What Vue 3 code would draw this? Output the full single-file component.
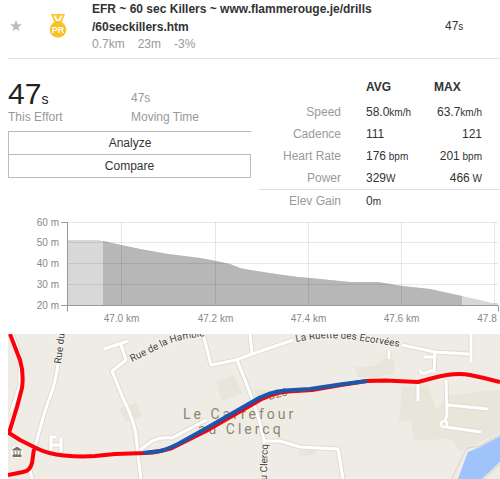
<template>
  <main class="effort">
    <header class="segment">
      <button class="segment__star" type="button" aria-label="Star segment">
        <svg viewBox="0 0 12 12" width="12" height="12">
          <path d="M6 0l1.500 4.200H12L8.400 6.900l1.300 4.400L6 8.700l-3.700 2.600 1.300-4.400L0 4.200h4.500z" fill="#bdbdbd" />
        </svg>
      </button>
      <svg class="segment__medal" viewBox="0 0 18 24" width="18" height="24">
        <path d="M2 0h14l-3.500 9h-7z" fill="#fcc534" />
        <path d="M4.500 1.500h2.500l2 3.500 2-3.500h2.500L11 7H7z" fill="#fff" />
        <path d="M6.500 1.500L9 5.500l2.500-4" stroke="#fcc534" fill="none" />
        <circle cx="9" cy="15.500" r="8.300" fill="#fcc022" />
        <text x="9" y="18.500" text-anchor="middle">PR</text>
      </svg>
      <div>
        <h1>EFR ~ 60 sec Killers ~ www.flammerouge.je/drills<br />/60seckillers.htm</h1>
        <p class="segment__facts">
          <span v-for="fact in facts" :key="fact">{{ fact }}</span>
        </p>
      </div>
      <div class="segment__time">47<small>s</small></div>
    </header>

    <section class="summary">
      <div>
        <dl class="times">
          <div class="times__item">
            <dd class="times__main">47<small>s</small></dd>
            <dt>This Effort</dt>
          </div>
          <div class="times__item">
            <dd>47s</dd>
            <dt>Moving Time</dt>
          </div>
        </dl>
        <div class="actions">
          <button type="button">Analyze</button>
          <button type="button">Compare</button>
        </div>
      </div>

      <table class="stats">
        <thead>
          <tr>
            <td></td>
            <th scope="col">AVG</th>
            <th scope="col">MAX</th>
          </tr>
        </thead>
        <tbody>
          <tr v-for="row in stats" :key="row.label">
            <th scope="row">{{ row.label }}</th>
            <td>{{ row.avg }}<small>{{ row.avgUnit }}</small></td>
            <td>{{ row.max }}<small>{{ row.maxUnit }}</small></td>
          </tr>
        </tbody>
      </table>
    </section>

    <svg class="chart" viewBox="0 216 500 112" role="img" aria-label="Elevation profile">
      <path :d="areaPath(profile)" fill="#d8d8d8" />
      <path :d="areaPath(effortProfile)" fill="#b7b7b7" />
      <g class="chart__grid">
        <line v-for="tick in yTicks" :key="tick.label" x1="67" x2="498" :y1="tick.y" :y2="tick.y" />
        <line v-for="tick in xTicks" :key="tick.label" :x1="tick.x" :x2="tick.x" y1="222" y2="305" />
      </g>
      <path class="chart__axis" d="M61 222.500h6.500v89M61 305.500h437.500v6" />
      <text v-for="tick in yTicks" :key="tick.label" x="59" :y="tick.y + 3" text-anchor="end">{{ tick.label }}</text>
      <text v-for="tick in xTicks" :key="tick.label" :x="tick.labelX || tick.x" y="322" text-anchor="middle">{{ tick.label }}</text>
    </svg>

    <svg class="map" viewBox="8 334 492 145" role="img" aria-label="Route map">
      <rect x="8" y="334" width="492" height="145" fill="#efece5" />
      <g fill="#e8e5db">
        <path d="M119 408l17-5 6 14-17 5zM216 381l18-6 8 18-20 8z" />
        <path d="M355 367l20-1 12-9 7 3v14l-22 4-14-1z" />
        <path d="M402 387l26-2 8 25 11-14 34-5 19-1v42l-40 20-8-13-38 1-3-19h-12z" />
        <path d="M297 452l16-4 4 6-16 3zM255 389l16 1-4 10h-12z" />
      </g>
      <path d="M500 436l-20 11-12 5-5 13-5 14h24l18-17z" fill="#a1c3fc" />
      <g class="map__casing">
        <path v-for="road in roads" :key="road" :d="road" />
      </g>
      <g class="map__road">
        <path v-for="road in roads" :key="road" :d="road" />
      </g>
      <g class="map__bank">
        <path d="M452 479l11-24 5-7 12-2 20-12M484 479l16-15" />
      </g>
      <circle cx="444" cy="424" r="3" fill="#e6e3d9" stroke="#fff" stroke-width="2" />

      <g class="map__place">
        <text x="183" y="419">Le Carrefour</text>
        <text x="198" y="434">au Clercq</text>
      </g>
      <text class="map__route-number" transform="translate(269 400) rotate(-14)">D26</text>

      <g class="map__track map__track--ride">
        <path d="M10 334L20 360Q24 373 22 388L17 407 9 433 20 440 36 448 Q48 454 64 455.500T95 456L115 454 146 453 Q160 452 172 448L206 431 253 404 Q270 393 288 391.500L312 390 341 385 367 381 385 380.500 418 382 433 378 Q455 372 470 375T500 382" />
        <path d="M34 449L32 463Q30 471 23 472L8 475" />
      </g>
      <path
        class="map__track map__track--effort"
        d="M143 453L160 451Q168 449 178 444L205 429 252 402 Q268 392 285 390.500L310 389 340 384.500 367 381"
      />

      <g class="map__street">
        <path id="hambie" d="M132 362L168 344Q183 338 215 335" fill="none" />
        <path id="ecorvees" d="M296 342Q330 335 362 341L406 348" fill="none" />
        <text transform="translate(61 364) rotate(-83)">Rue du</text>
        <text><textPath href="#hambie">Rue de la Hambie</textPath></text>
        <text><textPath href="#ecorvees">La Ruette des Ecorvées</textPath></text>
        <text transform="translate(268 444) rotate(-88)" text-anchor="end">u Clercq</text>
      </g>

      <circle cx="17" cy="452" r="6" fill="#fff" />
      <path d="M12.500 450l4.500-3 4.500 3zM13 455h8v1.500h-8zM14 451v4M17 451v4M20 451v4" fill="#7d725f" stroke="#7d725f" />
    </svg>
  </main>
</template>

<script setup>
const facts = ["0.7km", "23m", "-3%"];

const stats = [
  { label: "Speed", avg: "58.0", avgUnit: "km/h", max: "63.7", maxUnit: "km/h" },
  { label: "Cadence", avg: "111", max: "121" },
  { label: "Heart Rate", avg: "176", avgUnit: " bpm", max: "201", maxUnit: " bpm" },
  { label: "Power", avg: "329", avgUnit: "W", max: "466", maxUnit: " W" },
  { label: "Elev Gain", avg: "0", avgUnit: "m" },
];

const yTicks = [
  { label: "60 m", y: 222.5 },
  { label: "50 m", y: 242.5 },
  { label: "40 m", y: 263.5 },
  { label: "30 m", y: 284.5 },
  { label: "20 m", y: 305.5 },
];

const xTicks = [
  { label: "47.0 km", x: 121.5 },
  { label: "47.2 km", x: 215.5 },
  { label: "47.4 km", x: 308.5 },
  { label: "47.6 km", x: 401.5 },
  { label: "47.8", x: 494.5, labelX: 487 },
];

const profile = [
  [67, 240], [98, 240], [103, 241], [121, 245], [140, 249], [168, 254],
  [200, 258], [216, 261], [230, 264], [240, 268], [250, 270], [276, 274],
  [298, 277], [310, 278], [350, 282], [378, 282], [402, 286], [430, 289],
  [462, 296], [480, 300], [492, 303], [498, 303],
];

// the darker part of the chart covers only the segment itself
const effortProfile = profile.filter(([x]) => x >= 103 && x <= 462);

function areaPath(points) {
  const start = points[0][0];
  const end = points[points.length - 1][0];
  const line = points.map((point) => point.join(" ")).join("L");
  return `M${start} 305L${line}L${end} 305Z`;
}

const roads = [
  "M12 334L20 355V385L11 412",
  "M58 364Q55 385 50 397T35 447",
  "M51 436V450M51 437h5M61 438V452M51 445H61",
  "M104 349L128 341M121 345L126 360 112 371 122 396Q134 420 136 435L138 455 141 479",
  "M140 450L152 441Q160 437 172 438L206 420",
  "M30 470L32 479",
  "M203 334L211 365 236 360 252 354 293 340M250 334L252 353",
  "M237 360L245 380 253 401 259 420 264 440V479",
  "M264 441H280L300 447 338 449 343 479",
  "M402 345L435 352 469 354M471 334V362M389 350V359M435 352L434 373",
  "M424 357H434M420 370Q420 374 425 373L433 370M418 383V401",
  "M446 380L447 415 444 424M446 427L481 432M448 405L488 409",
];
</script>

<style>
body {
  margin: 0;
  background: #fff;
}
</style>

<style scoped>
.effort {
  font-family: "Liberation Sans", Arial, sans-serif;
  font-size: 12px;
  line-height: 14px;
  color: #333;
}

small {
  font-size: 10px;
  line-height: 1;
  white-space: pre;
}

button {
  font: inherit;
  color: inherit;
  background: none;
  cursor: pointer;
}

.segment {
  display: grid;
  grid-template-columns: 16px 68px 1fr 55px;
  align-items: center;
  margin-left: 8px;
  padding-bottom: 6px;
  border-bottom: 1px solid #e2e2e2;
}

.segment__star {
  display: flex;
  padding: 0 2px;
  border: none;
}

.segment__medal {
  justify-self: center;
}

.segment__medal text {
  font-size: 9px;
  font-weight: 700;
  fill: #fff;
}

.segment h1 {
  margin: 0;
  font-size: 12px;
  line-height: 18px;
  white-space: nowrap;
}

.segment__facts {
  display: flex;
  gap: 13px;
  margin: 0;
  line-height: 16px;
  color: #999;
}

.summary {
  display: grid;
  grid-template-columns: 243fr 241fr;
  gap: 8px;
  margin-left: 8px;
  padding-bottom: 4px;
}

.times {
  display: grid;
  grid-template-columns: 123px 1fr;
  align-items: end;
  margin: 18px 0 7px;
  color: #999;
}

.times__item dd {
  margin: 0;
  line-height: 24px;
}

.times__item dt {
  line-height: 14px;
}

.times__item .times__main {
  font-size: 30px;
  line-height: 33px;
  color: #222;
}

.times__main small {
  font-size: 14px;
}

.actions {
  display: grid;
}

.actions button {
  height: 23px;
  padding: 0;
  border: 1px solid #bbb;
  border-width: 1px 0 0 1px;
}

.actions button:last-child {
  height: 24px;
  border-width: 1px;
}

.stats {
  width: 100%;
  height: fit-content;
  margin-top: 14px;
  border-collapse: separate;
  border-spacing: 0;
  table-layout: fixed;
}

.stats th,
.stats td {
  height: 22px;
  padding: 0;
  text-align: left;
}

.stats thead td {
  width: 107px;
}

.stats thead th,
.stats thead td {
  height: 28px;
}

.stats thead th:last-child {
  width: 66px;
}

.stats tbody th {
  padding-right: 25px;
  font-weight: 400;
  text-align: right;
  color: #999;
}

.stats tbody td:last-child {
  padding-right: 18px;
  text-align: right;
}

.stats tbody tr:last-child > * {
  border-top: 1px solid #ddd;
}

.chart {
  display: block;
  width: 100%;
}

.chart text {
  font-size: 10px;
  fill: #888;
}

.chart__grid {
  stroke: #000;
  stroke-opacity: 0.09;
}

.chart__axis {
  fill: none;
  stroke: #999;
}

.map {
  display: block;
  width: calc(100% - 8px);
  margin: 6px 0 0 8px;
  overflow: hidden;
  font-family: Roboto, "Liberation Sans", sans-serif;
}

.map__casing,
.map__road,
.map__bank,
.map__track {
  fill: none;
  stroke-linejoin: round;
}

.map__casing {
  stroke: #dedbd3;
  stroke-width: 5;
}

.map__road {
  stroke: #fff;
  stroke-width: 3;
}

.map__bank {
  stroke: #d6d2c6;
}

.map__place {
  font-size: 14px;
  letter-spacing: 3px;
  fill: #8d866c;
}

.map__route-number {
  font-size: 11px;
  fill: #8a7c5a;
}

.map__track {
  stroke-width: 4;
}

.map__track--ride {
  stroke: #fb0008;
}

.map__track--effort {
  stroke: #1d57ad;
}

.map__street {
  font-size: 10px;
  fill: #444;
}

.map__street text {
  paint-order: stroke;
  stroke: #f5f3ee;
  stroke-width: 2;
}
</style>
